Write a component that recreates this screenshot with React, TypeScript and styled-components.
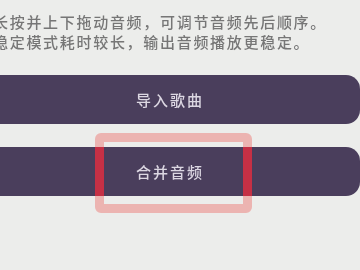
import React from "react";
import styled, { createGlobalStyle } from "styled-components";

const GlobalStyle = createGlobalStyle`
  html, body {
    margin: 0;
    padding: 0;
    background: #ecedeb;
    overflow: hidden;
  }
  body {
    width: 360px;
    height: 270px;
    font-family: "Noto Sans CJK SC", "Noto Sans", sans-serif;
  }
`;

const Page = styled.div`
  position: relative;
  width: 360px;
  height: 270px;
  overflow: hidden;
`;

const Hint = styled.div`
  padding-top: 12px;
  margin-left: -7px;
  color: #767676;
  font-size: 15px;
  font-weight: 500;
  line-height: 20px;
  letter-spacing: 1.7px;
  white-space: nowrap;
`;

const ButtonList = styled.div`
  display: flex;
  flex-direction: column;
  gap: 23px;
  margin-top: 23px;
  margin-left: -20px;
  width: 380px;
`;

const ActionButton = styled.button`
  border: none;
  outline: none;
  padding: 0;
  height: 49px;
  width: 100%;
  border-radius: 14px;
  background-color: #4a3e5c;
  color: #dcd7e2;
  font: inherit;
  font-size: 15px;
  font-weight: 500;
  letter-spacing: 2px;
  cursor: pointer;
`;

// annotation frame drawn over the second button
const Highlight = styled.div`
  position: absolute;
  left: 95px;
  top: 133px;
  width: 157px;
  height: 80px;
  pointer-events: none;

  &::before,
  &::after {
    content: "";
    position: absolute;
    inset: 0;
    box-sizing: border-box;
    border-width: 9px;
    border-style: solid;
    border-radius: 6px;
  }

  &::before {
    border-color: #ffc2c0;
    mix-blend-mode: multiply;
  }

  &::after {
    border-color: #c6303f;
    mix-blend-mode: lighten;
  }
`;

function App() {
  return (
    <Page>
      <GlobalStyle />
      <Hint>
        <div>长按并上下拖动音频，可调节音频先后顺序。</div>
        <div>稳定模式耗时较长，输出音频播放更稳定。</div>
      </Hint>
      <ButtonList>
        <ActionButton>导入歌曲</ActionButton>
        <ActionButton>合并音频</ActionButton>
      </ButtonList>
      <Highlight />
    </Page>
  );
}

export default App;
